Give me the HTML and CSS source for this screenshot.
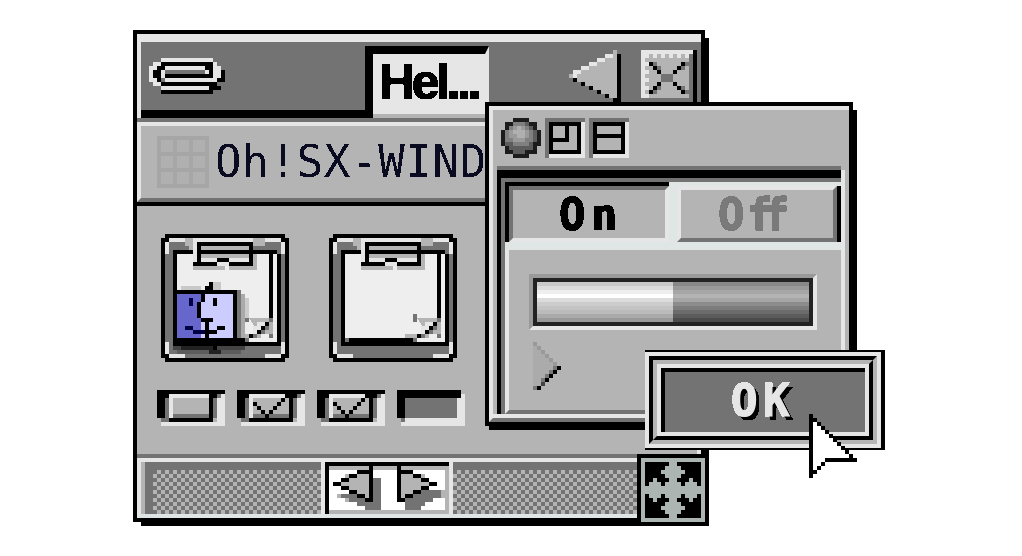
FILE: index.html
```html
<!DOCTYPE html>
<html lang="en">
<head>
<meta charset="utf-8">
<title>Oh!SX-WINDOW</title>
<link rel="stylesheet" href="styles.css">
</head>
<body>
<svg class="defs" aria-hidden="true">
  <defs>
    <filter id="crisp" x="0" y="0" width="100%" height="100%" color-interpolation-filters="sRGB">
      <feComponentTransfer><feFuncA type="discrete" tableValues="0 1"/></feComponentTransfer>
    </filter>
    <symbol id="clipboard" viewBox="0 0 32 32">
      <path class="d" d="M1 1h30v30h-30z"/>
      <path class="k" d="M1 0h30v1h-30zM1 31h30v1h-30zM0 1h1v30h-1zM31 1h1v30h-1zM1 1h1v1h-1zM30 1h1v1h-1zM1 30h1v1h-1zM30 30h1v1h-1z"/>
      <path class="l" d="M2 1h4v1h-4zM1 2h1v3h-1zM26 1h4v1h-4zM30 2h1v3h-1zM1 27h1v3h-1zM2 30h4v1h-4zM30 27h1v3h-1zM26 30h4v1h-4z"/>
      <path class="g" d="M6 1h2v2h-2zM23 1h3v2h-3zM7 3h1v6h-1zM23 5h4v0z"/>
      <path class="w" d="M4 5h23v21h-23zM28 5h1v22h-1zM22 26h6v1h-6z"/>
      <path class="k" d="M3 4h5v1h-5zM3 5h1v22h-1zM23 4h6v1h-6zM27 5h1v16h-1zM29 5h1v22h-1zM3 27h27v1h-27zM5 26h16v1h-16z"/>
      <path class="l" d="M8 1h15v7h-15z"/>
      <path class="g" d="M10 3h12v1h-12zM10 5h12v1h-12zM8 8h8v1h-8zM17 8h6v1h-6zM23 5h1v4h-1z"/>
      <path class="k" d="M9 2h13v1h-13zM10 4h12v1h-12zM9 3h1v4h-1zM22 2h1v6h-1zM8 7h6v1h-6zM14 6h3v1h-3zM17 7h5v1h-5z"/>
      <path class="d" d="M21 20h1v2h-1z"/>
      <path class="g" d="M22 21h6v4h-3v1h-6v-1h4v-1h1z"/>
      <path class="l" d="M24 22h2v1h-1v1h-1v1h-1v-2h1z"/>
      <path class="k" d="M26 22h1v1h-1zM25 23h1v1h-1zM24 24h1v1h-1zM22 25h1v1h-1z"/>
      <path class="d" d="M27 21h1v1h-1zM26 23h1v1h-1zM25 24h1v1h-1zM23 25h1v1h-1z"/>
    </symbol>
    <symbol id="box" viewBox="0 0 17 9">
      <path class="l" d="M3 1h10v1h-10zM3 2h1v5h-1zM15 2h2v7h-2zM1 8h14v1h-14zM16 1h1v1h-1z"/>
      <path class="d" d="M2 2h1v5h-1zM1 7h2v1h-2zM4 6h9v1h-9zM14 2h1v5h-1zM15 1h1v1h-1z"/>
      <path class="k" d="M0 0h17v1h-17zM0 1h2v6h-2zM2 1h1v1h-1zM13 1h2v1h-2zM13 2h1v6h-1zM3 7h10v1h-10z"/>
    </symbol>
    <symbol id="box-check" viewBox="0 0 17 9">
      <use href="#box"/>
      <path class="k" d="M4 3h1v1h-1zM5 4h1v1h-1zM6 5h1v1h-1zM7 6h1v1h-1zM8 5h1v1h-1zM9 4h1v1h-1zM10 3h1v1h-1zM11 2h1v1h-1zM12 1h1v1h-1z"/>
    </symbol>
    <symbol id="box-off" viewBox="0 0 17 9">
      <path class="l" d="M15 1h2v8h-2zM2 7h13v2h-13zM1 8h1v1h-1z"/>
      <path class="d" d="M2 2h13v5h-13zM1 7h1v1h-1z"/>
      <path class="k" d="M0 0h16v2h-16zM0 2h2v5h-2z"/>
    </symbol>
  </defs>
</svg>

<main class="stage">
  <section class="win main-win">
    <header class="title-one">
      <div class="title-left">
        <div class="title-left-in">
          <svg class="px clip-icon" viewBox="0 0 19 9" aria-hidden="true">
            <path class="l" d="M3 0h13v1h-13zM1 1h2v1h-2zM16 1h1v1h-1zM0 2h2v1h-2zM4 2h10v1h-10zM16 2h2v1h-2zM0 3h1v2h-1zM3 3h1v2h-1zM14 3h1v1h-1zM16 3h2v2h-2zM0 5h2v1h-2zM4 5h13v1h-13zM1 6h2v1h-2zM3 7h12v1h-12z"/>
            <path class="k" d="M3 1h13v1h-13zM2 2h2v1h-2zM14 2h2v1h-2zM1 3h2v2h-2zM15 3h1v2h-1zM18 3h1v2h-1zM4 4h11v1h-11zM2 5h1v1h-1zM17 5h2v1h-2zM3 6h14v1h-14zM15 7h3v1h-3zM3 8h13v1h-13z"/>
          </svg>
        </div>
      </div>
      <div class="tab-hel"><span class="pix hel">Hel...</span></div>
      <svg class="px back-icon" viewBox="0 0 13 13" aria-hidden="true">
        <path class="g" d="M11 0h1v2h-1zM9 2h3v1h-3zM7 3h5v1h-5zM5 4h7v1h-7zM3 5h9v1h-9zM0 6h12v1h-12zM2 7h10v1h-10zM4 8h8v1h-8zM6 9h6v1h-6zM8 10h4v1h-4zM10 11h2v1h-2z"/>
        <path class="l" d="M9 1h2v1h-2zM7 2h2v1h-2zM5 3h2v1h-2zM3 4h2v1h-2zM1 5h2v1h-2zM1 6h1v1h-1z"/>
        <path class="k" d="M12 1h1v12h-1zM11 12h1v1h-1zM1 7h1v1h-1zM3 8h1v1h-1zM5 9h1v1h-1zM7 10h1v1h-1zM9 11h1v1h-1z"/>
      </svg>
      <svg class="px close-icon" viewBox="0 0 14 13" aria-hidden="true">
        <path class="g" d="M1 1h11v11h-11z"/>
        <path class="d" d="M12 1h1v12h-13v-1h12zM5 6h3v2h-3zM3 3h1v1h-1zM4 4h1v1h-1zM11 3h1v1h-1zM10 4h1v1h-1zM3 10h1v1h-1zM4 9h1v1h-1zM11 10h1v1h-1zM10 9h1v1h-1z"/>
        <path class="l" d="M0 0h13v1h-13zM0 1h1v11h-1zM1 1h1v1h-1zM3 1h1v1h-1zM5 1h1v1h-1zM7 1h1v1h-1zM9 1h1v1h-1zM11 1h1v1h-1zM1 3h1v1h-1zM1 5h1v1h-1zM1 7h1v1h-1zM1 9h1v1h-1zM1 11h1v1h-1z"/>
        <path class="k" d="M13 0h1v13h-1zM2 3h1v1h-1zM3 4h1v1h-1zM4 5h1v1h-1zM10 3h1v1h-1zM9 4h1v1h-1zM8 5h1v1h-1zM4 8h1v1h-1zM3 9h1v1h-1zM2 10h1v1h-1zM8 8h1v1h-1zM9 9h1v1h-1zM10 10h1v1h-1z"/>
      </svg>
    </header>

    <div class="title-two">
      <div class="title-two-in">
        <div class="grid-icon" aria-hidden="true">
          <i></i><i></i><i></i><i></i><i></i><i></i><i></i><i></i><i></i>
        </div>
        <span class="pix win-name">Oh!SX-WINDOW</span>
      </div>
    </div>

    <div class="body">
      <div class="icons">
        <svg class="px doc" viewBox="0 0 32 32" aria-hidden="true">
          <use href="#clipboard"/>
          <path fill="#444" d="M3 28h18v1h-18z"/>
          <path fill="#5c5c5c" d="M4 29h16v1h-16z"/>
          <path fill="#222" d="M5 28h9v1h-9zM12 29h3v1h-3z"/>
          <path fill="#c8c8c8" d="M5 13h5v1h-5zM13 12h2v2h-2zM14 14h5v1h-5z"/>
          <path fill="#777" d="M19 14h1v13h-1z"/>
          <path fill="#aaa" d="M20 15h1v11h-1z"/>
          <path fill="#ccc" d="M21 16h1v5h-1z"/>
          <path fill="#6666cc" d="M4 15h7v11h-7z"/>
          <path fill="#ccccff" d="M10 15h8v11h-8z"/>
          <path class="k" d="M3 14h16v1h-16zM3 15h1v13h-1zM18 15h1v12h-1zM3 26h17v2h-17zM12 12h1v1h-1zM11 13h2v1h-2zM10 15h1v2h-1zM9 17h1v4h-1zM10 21h3v1h-3zM11 22h1v6h-1zM13 16h1v2h-1zM12 24h2v1h-2zM14 23h2v1h-2zM13 28h1v1h-1z"/>
          <path fill="#000044" d="M7 16h1v2h-1zM6 23h2v1h-2zM8 24h3v1h-3z"/>
        </svg>
        <svg class="px doc" viewBox="0 0 32 32" aria-hidden="true"><use href="#clipboard"/></svg>
      </div>
      <div class="boxes">
        <svg class="px box-icon" viewBox="0 0 17 9" aria-hidden="true"><use href="#box"/></svg>
        <svg class="px box-icon" viewBox="0 0 17 9" aria-hidden="true"><use href="#box-check"/></svg>
        <svg class="px box-icon" viewBox="0 0 17 9" aria-hidden="true"><use href="#box-check"/></svg>
        <svg class="px box-icon" viewBox="0 0 17 9" aria-hidden="true"><use href="#box-off"/></svg>
      </div>
    </div>

    <footer class="scroll">
      <div class="scroll-row">
        <div class="track"></div>
        <div class="nav">
          <svg class="px nav-icon" viewBox="0 0 31 13" aria-hidden="true">
            <path class="wh" d="M1 2h29v10h-29z"/>
            <path class="g" d="M1 1h30v1h-30zM1 12h30v1h-30zM30 2h1v10h-1zM5 3h6v1h-6zM6 4h5v1h-5zM4 5h7v1h-7zM6 6h5v1h-5zM8 7h3v1h-3zM10 8h1v1h-1zM19 3h3v1h-3zM24 3h1v1h-1zM19 4h5v1h-5zM19 5h7v1h-7zM19 6h5v1h-5zM19 7h3v1h-3zM19 8h1v1h-1zM29 7h1v2h-1zM3 8h1v1h-1zM5 9h1v1h-1z"/>
            <path class="d" d="M12 4h2v8h-2zM4 8h4v1h-4zM6 9h4v1h-4zM8 10h4v1h-4zM10 11h2v1h-2zM24 7h5v2h-5zM22 8h2v1h-2zM20 9h7v1h-7zM20 10h5v1h-5zM20 11h4v1h-4z"/>
            <path class="k" d="M0 0h31v1h-31zM0 1h1v12h-1zM11 1h1v9h-1zM8 2h3v1h-3zM6 3h2v1h-2zM4 4h2v1h-2zM2 5h2v1h-2zM4 6h2v1h-2zM6 7h2v1h-2zM8 8h2v1h-2zM10 9h1v1h-1zM18 1h1v9h-1zM19 2h3v1h-3zM22 3h2v1h-2zM24 4h2v1h-2zM26 5h2v1h-2zM24 6h2v1h-2zM22 7h2v1h-2zM20 8h2v1h-2zM19 9h1v1h-1z"/>
          </svg>
        </div>
        <div class="track track-right"></div>
      </div>
    </footer>

    <div class="resize">
      <svg class="px resize-icon" viewBox="0 0 14 14" aria-hidden="true">
        <path class="c" d="M6 0h2v1h1v1h1v1h-1v1h-1v1h1v1h5v2h-5v1h-1v1h1v1h1v1h-1v1h-1v1h-2v-1h-1v-1h-1v-1h1v-1h1v-1h-1v-1h-5v-2h5v-1h1v-1h-1v-1h-1v-1h1v-1h1z"/>
        <path class="c" d="M2 4h1v1h1v1h-3v-1h1zM11 4h1v1h1v1h-3v-1h1zM1 8h3v1h-1v1h-1v-1h-1zM10 8h3v1h-1v1h-1v-1h-1z"/>
      </svg>
    </div>
  </section>

  <section class="win sub-win">
    <div class="sub-shell">
      <div class="sub-head">
        <svg class="px ball" viewBox="0 0 10 10" aria-hidden="true">
          <path fill="#1c1c1c" d="M3 0h4v1h2v2h1v4h-1v2h-2v1h-4v-1h-2v-2h-1v-4h1v-2h2z"/>
          <path fill="#5c5c5c" d="M3 1h4v1h1v1h1v3h-1v2h-2v1h-3v-1h-1v-1h-1v-4h1v-1h1z"/>
          <path fill="#808080" d="M3 1h3v1h1v1h1v3h-1v1h-4v-1h-2v-3h1v-1h1z"/>
          <path fill="#9a9a9a" d="M3 2h3v1h1v2h-1v1h-3v-1h-1v-2h1z"/>
          <path fill="#b0b0b0" d="M4 2h1v1h1v2h-2v-1h-1v-1h1z"/>
        </svg>
        <svg class="px mini" viewBox="0 0 10 10" aria-hidden="true">
          <path class="l" d="M1 9h9v1h-9zM9 1h1v8h-1z"/>
          <path class="d" d="M0 0h10v1h-10zM0 1h1v9h-1z"/>
          <path class="k" d="M1 1h8v8h-8zM2 2h6v6h-6z" fill-rule="evenodd"/>
          <path class="k" d="M5 2h1v4h-1zM2 5h3v1h-3z"/>
        </svg>
        <svg class="px mini" viewBox="0 0 10 10" aria-hidden="true">
          <path class="l" d="M1 9h9v1h-9zM9 1h1v8h-1z"/>
          <path class="d" d="M0 0h10v1h-10zM0 1h1v9h-1z"/>
          <path class="k" d="M1 1h8v8h-8zM2 2h6v6h-6z" fill-rule="evenodd"/>
          <path class="k" d="M2 4h6v1h-6z"/>
        </svg>
      </div>
      <div class="sub-rule"></div>
      <div class="frame">
        <div class="frame-black">
          <div class="frame-gray">
            <div class="tabs">
              <div class="tab-on"><div class="tab-on-in"><span class="pix tab-text">On</span></div></div>
              <div class="tab-off"><div class="tab-off-edge"><div class="tab-off-in"><span class="pix tab-text off-text">O<span class="ff">f</span>f</span></div></div></div>
            </div>
            <div class="pane">
              <div class="bar"><div class="bar-in"><div class="bar-lit"></div><div class="bar-dim"></div></div></div>
              <svg class="px play" viewBox="0 0 7 12" aria-hidden="true">
                <path class="p" d="M0 0h1v1h1v1h1v1h1v1h1v1h1v2h-1v1h-1v1h-1v1h-1v1h-2z"/>
                <path class="m" d="M0 0h1v1h-1zM1 1h1v1h-1zM2 2h1v1h-1zM3 3h1v1h-1zM4 4h1v1h-1zM5 5h1v1h-1z"/>
                <path fill="#777" d="M5 6h1v1h-1zM4 7h1v1h-1zM3 8h1v1h-1zM2 9h1v1h-1zM0 11h1v1h-1z"/>
                <path class="k" d="M6 6h1v1h-1zM5 7h1v1h-1zM4 8h1v1h-1zM3 9h1v1h-1zM1 11h1v1h-1z"/>
                <path fill="#444" d="M2 10h1v1h-1z"/>
              </svg>
            </div>
          </div>
        </div>
      </div>
      <div class="sub-base"></div>
    </div>
  </section>

  <button class="ok" type="button">
    <span class="ok-light"><span class="ok-black"><span class="ok-gray"><span class="ok-pale"><span class="ok-face"><span class="pix ok-text">OK</span></span></span></span></span></span>
  </button>

  <svg class="px cursor" viewBox="0 0 12 16" aria-hidden="true">
    <path class="wh" d="M1 2h1v1h1v1h1v1h1v1h1v1h1v1h1v1h1v1h1v1h-6v1h-1v1h-1v1h-1z"/>
    <path class="k" d="M0 0h1v16h-1zM1 1h1v1h-1zM2 2h1v1h-1zM3 3h1v1h-1zM4 4h1v1h-1zM5 5h1v1h-1zM6 6h1v1h-1zM7 7h1v1h-1zM8 8h1v1h-1zM9 9h1v1h-1zM10 10h1v1h-1zM4 11h8v1h-8zM3 12h1v1h-1zM2 13h1v1h-1zM1 14h1v1h-1z"/>
  </svg>
</main>
</body>
</html>
```

FILE: styles.css
```css
* { box-sizing: border-box; }
html, body { margin: 0; padding: 0; background: #fff; }
body { width: 1022px; height: 556px; overflow: hidden; }

.defs { position: absolute; width: 0; height: 0; }
.stage { position: relative; width: 1022px; height: 556px; overflow: hidden; }

/* pixel art */
.px { display: block; shape-rendering: crispEdges; flex: none; overflow: visible; }
.k { fill: #000; }
.d { fill: #737373; }
.g { fill: #b4b4b4; }
.l { fill: #e6e6e6; }
.w { fill: #eeeeee; }
.wh { fill: #fff; }
.c { fill: #adb5b2; }
.p { fill: #ababab; }
.m { fill: #999; }
.pix { filter: url(#crisp); white-space: nowrap; }

/* windows on the desktop */
.win { position: absolute; z-index: 1; border: 4px solid #000; display: flex; flex-direction: column; }
.win::before { content: ""; position: absolute; z-index: -1; background: #000; }

.main-win { left: 133px; top: 30px; width: 572px; height: 492px; }
.main-win::before { left: 4px; top: 4px; right: -8px; bottom: -8px; }

.title-one { height: 88px; flex: none; display: flex; background: #737373; border-top: 8px solid #e6e6e6; }
.title-left { width: 228px; border-left: 8px solid #e6e6e6; height: 76px; }
.title-left-in { height: 76px; margin-left: -4px; padding: 16px 0 0 8px; background: #737373; border-bottom: 8px solid #000; }
.clip-icon { width: 76px; height: 36px; }
.tab-hel { width: 124px; height: 72px; margin-top: 4px; background: #e6e6e6; border-top: 8px solid #000; border-left: 8px solid #000; border-right: 4px solid #e6e6e6; box-shadow: inset 0 -4px 0 #b4b4b4; padding-left: 6px; overflow: hidden; display: flex; align-items: flex-start; }
.hel { font: 700 50px/56px "Liberation Sans", Arial, sans-serif; letter-spacing: -3.4px; color: #000; -webkit-text-stroke: 1.2px #000; }
.back-icon { width: 52px; height: 52px; margin: 8px 0 0 80px; }
.close-icon { width: 56px; height: 52px; margin: 8px 0 0 20px; }

.title-two { height: 84px; flex: none; border-bottom: 4px solid #000; }
.title-two-in { height: 80px; background: #b4b4b4; border-left: 4px solid #e6e6e6; border-top: 4px solid #e6e6e6; border-bottom: 4px solid #737373; padding: 0 0 0 16px; display: flex; align-items: center; overflow: hidden; }
.grid-icon { width: 52px; height: 52px; flex: none; padding: 4px; background: #a6a6a6; display: grid; grid-template-columns: repeat(3, 12px); grid-auto-rows: 12px; gap: 4px; }
.grid-icon i { background: #b0b0b0; }
.win-name { margin-left: 6px; font: 400 44px/48px "DejaVu Sans Mono", monospace; letter-spacing: 0.7px; color: #0a0a20; }

.body { height: 248px; flex: none; background: #b4b4b4; padding: 28px 0 0 20px; border-right: 4px solid #e6e6e6; }
.icons { display: flex; gap: 40px; padding-left: 4px; }
.doc { width: 128px; height: 128px; }
.boxes { display: flex; gap: 12px; margin-top: 28px; }
.box-icon { width: 68px; height: 36px; }

.scroll { height: 64px; flex: none; border-top: 4px solid #737373; background: #e6e6e6; padding-top: 4px; }
.scroll-row { height: 56px; display: flex; border-left: 4px solid #e6e6e6; border-bottom: 4px solid #dfe5e5; background: #b4b4b4; padding-left: 4px; }
.track { width: 176px; height: 52px; flex: none; border-top: 8px solid #737373; border-left: 8px solid #737373; background: repeating-conic-gradient(#b4b4b4 0 25%, #737373 0 50%) 0 0 / 8px 8px; }
.track-right { flex: 1; width: auto; border-left: 0; }
.nav { width: 132px; height: 52px; flex: none; padding: 0 4px; background: #e6e6e6; }
.nav-icon { width: 124px; height: 52px; }

.resize { position: absolute; right: -8px; bottom: -8px; width: 72px; height: 72px; background: #000; border: 4px solid #000; }
.resize::before { content: ""; position: absolute; inset: 0; border: 4px solid #adb5b2; }
.resize-icon { position: absolute; left: 4px; top: 4px; width: 56px; height: 56px; }

/* dialog */
.sub-win { left: 485px; top: 102px; width: 368px; height: 324px; }
.sub-win::before { left: 0; top: 4px; right: -8px; bottom: -8px; }
.sub-shell { height: 316px; display: flex; flex-direction: column; background: #b4b4b4; border-top: 4px solid #e6e6e6; border-left: 4px solid #e6e6e6; border-bottom: 4px solid #737373; padding: 0 0 0 4px; }
.sub-head { height: 56px; flex: none; display: flex; align-items: flex-start; padding: 8px 0 0 4px; gap: 4px; }
.ball, .mini { width: 40px; height: 40px; }
.sub-rule { height: 4px; flex: none; width: 344px; background: #737373; }
.frame { height: 244px; flex: none; width: 348px; border-right: 4px solid #e6e6e6; }
.frame-black { height: 244px; border-left: 4px solid #000; border-top: 8px solid #000; }
.frame-gray { height: 236px; border-left: 4px solid #737373; border-top: 4px solid #737373; display: flex; flex-direction: column; }
.tabs { height: 68px; flex: none; display: flex; background: #e0e6e6; padding-bottom: 8px; }
.tab-on { width: 164px; flex: none; border-left: 4px solid #000; border-top: 4px solid #000; }
.tab-on-in { height: 56px; background: #b4b4b4; border-top: 4px solid #737373; border-left: 4px solid #737373; border-right: 4px solid #e6e6e6; border-bottom: 4px solid #e6e6e6; display: flex; align-items: center; padding: 2px 0 0 46px; }
.tab-off { flex: 1; padding: 4px 0 0 8px; }
.tab-off-edge { height: 56px; border-right: 4px solid #000; }
.tab-off-in { height: 56px; background: #b4b4b4; border-top: 4px solid #e6e6e6; border-left: 4px solid #e6e6e6; border-right: 4px solid #737373; border-bottom: 4px solid #737373; display: flex; align-items: center; padding: 2px 0 0 37px; }
.tab-text { font: 700 44px/44px "DejaVu Sans Mono", monospace; letter-spacing: 5.5px; color: #000; -webkit-text-stroke: 1.2px currentColor; }
.off-text { color: #7a7a7a; letter-spacing: 2px; }
.ff { letter-spacing: -10px; }
.pane { height: 164px; flex: none; border-left: 4px solid #e6e6e6; border-bottom: 4px solid #737373; padding: 24px 0 0 20px; }
.bar { width: 288px; height: 56px; border-top: 4px solid #999; border-left: 4px solid #999; border-right: 4px solid #e6e6e6; border-bottom: 4px solid #e6e6e6; }
.bar-in { height: 48px; border: 4px solid #222; display: flex; }
.bar-lit, .bar-dim { flex: 1; }
.bar-lit { background: linear-gradient(#cacaca 0 4px, #dcdcdc 4px 8px, #efefef 8px 12px, #fff 12px 16px, #dcdcdc 16px 20px, #cccccc 20px 24px, #c4c4c4 24px 28px, #bbb 28px 32px, #aaa 32px 36px, #999 36px 40px); }
.bar-dim { background: linear-gradient(#888 0 4px, #999 4px 8px, #a6a6a6 8px 12px, #b4b4b4 12px 16px, #a6a6a6 16px 20px, #8c8c8c 20px 24px, #7c7c7c 24px 28px, #6c6c6c 28px 32px, #5c5c5c 32px 36px, #4c4c4c 36px 40px); }
.play { width: 28px; height: 48px; margin: 12px 0 0 4px; }
.sub-base { height: 4px; flex: none; background: #e6e6e6; margin-left: -4px; }

/* OK button */
.ok { position: absolute; z-index: 2; left: 645px; top: 350px; width: 240px; height: 100px; margin: 0; padding: 0; border: 0; background: #000; display: block; }
.ok span { display: block; }
.ok-light { width: 236px; height: 96px; border: 4px solid #e6e6e6; background: #e6e6e6; }
.ok-black { height: 88px; border-top: 4px solid #000; border-left: 4px solid #000; border-right: 4px solid #b4b4b4; border-bottom: 4px solid #b4b4b4; }
.ok-gray { height: 80px; border-top: 4px solid #b4b4b4; border-left: 4px solid #b4b4b4; border-right: 4px solid #000; border-bottom: 4px solid #000; }
.ok-pale { height: 72px; border: 4px solid #e6e6e6; }
.ok-face { height: 64px; background: #737373; border-top: 4px solid #000; border-left: 4px solid #000; display: flex !important; padding: 7px 0 0 66px; }
.ok-text { font: 700 44px/44px "DejaVu Sans Mono", monospace; letter-spacing: 5.5px; color: #e6e6e6; -webkit-text-stroke: 1.2px #e6e6e6; text-shadow: 4px 4px 0 #000; }

.cursor { position: absolute; z-index: 3; left: 809px; top: 414px; width: 48px; height: 64px; }
```
